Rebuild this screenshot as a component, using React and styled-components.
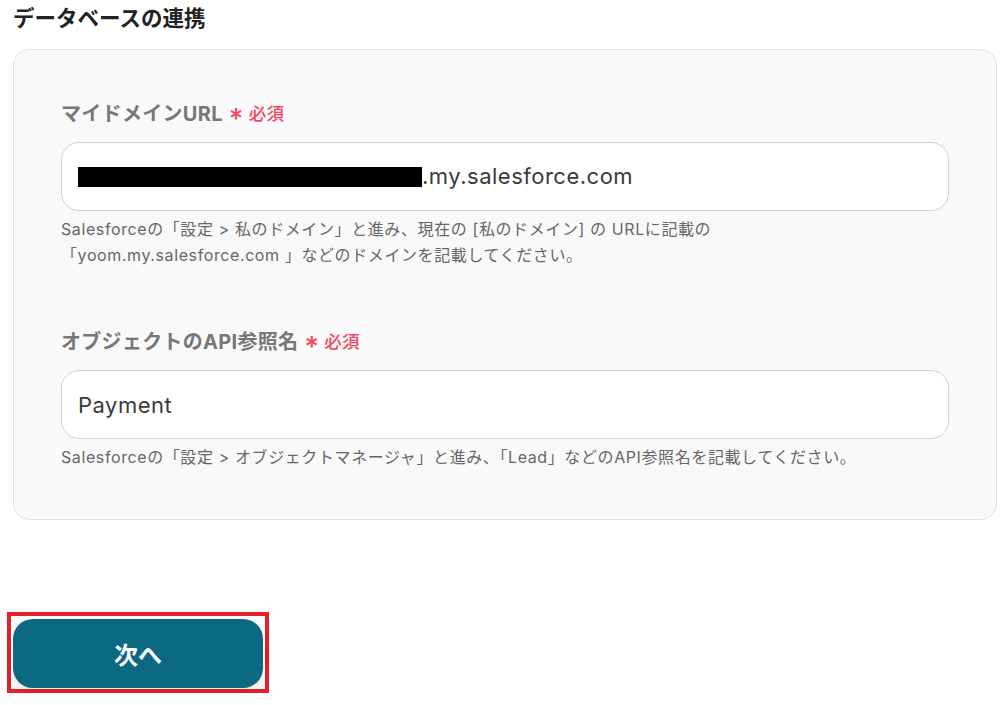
import React from 'react';
import styled, { createGlobalStyle } from 'styled-components';

const Global = createGlobalStyle`
  body {
    margin: 0;
    background: #fff;
    font-family: 'Inter', 'Noto Sans CJK JP', sans-serif;
  }
`;

const Page = styled.div`
  padding: 0 11px 0 13px;
`;

const Heading = styled.h2`
  margin: 0;
  padding-top: 3px;
  font-size: 21.5px;
  line-height: 30px;
  font-weight: 700;
  color: #222;
`;

const Card = styled.div`
  margin-top: 16px;
  background: #f9f9f9;
  border: 1px solid #e2e2e4;
  border-radius: 16px;
  padding: 50px 47px 49px;
`;

const Field = styled.div`
  & + & {
    margin-top: 60px;
  }
`;

const Label = styled.div`
  display: flex;
  align-items: center;
  gap: 6px;
  font-size: 20px;
  line-height: 28px;
  font-weight: 700;
  letter-spacing: 0.3px;
  color: #777;
`;

const Required = styled.span`
  display: inline-flex;
  align-items: center;
  gap: 5px;
  color: #f2475e;
  font-size: 17.5px;
  font-weight: 500;
  b {
    font-size: 28px;
    font-weight: 500;
    line-height: 1;
    position: relative;
    top: 5px;
  }
`;

const Input = styled.div`
  margin-top: 14px;
  height: 67px;
  background: #fff;
  border: 1px solid #cdd1d8;
  border-radius: 18px;
  display: flex;
  align-items: center;
  padding: 0 16px;
  font-size: 22px;
  line-height: 26px;
  color: #3a3a3a;
  letter-spacing: 0.5px;
  span {
    position: relative;
    top: -1px;
  }
`;

const Redacted = styled.i`
  display: block;
  width: 344px;
  height: 20px;
  background: #000;
`;

const Help = styled.p`
  margin: 5px 0 0;
  font-size: 16px;
  line-height: 26px;
  letter-spacing: 0.6px;
  color: #666;
`;

const Footer = styled.div`
  margin-top: 92px;
  margin-left: -6px;
  display: inline-block;
  border: 4px solid #e8202a;
  padding: 3px 2px 1px 2px;
`;

const NextButton = styled.button`
  width: 250px;
  height: 69px;
  border: none;
  border-radius: 20px;
  background: #0b6a82;
  color: #fff;
  font-family: inherit;
  font-size: 24px;
  font-weight: 700;
  box-shadow: 0 4px 14px rgba(0, 0, 0, 0.12);
  display: block;
`;

export default function App() {
  return (
    <Page>
      <Global />
      <Heading>データベースの連携</Heading>
      <Card>
        <Field>
          <Label>
            マイドメインURL
            <Required>
              <b>*</b>必須
            </Required>
          </Label>
          <Input>
            <Redacted />
            <span>.my.salesforce.com</span>
          </Input>
          <Help>
            Salesforceの「設定 &gt; 私のドメイン」と進み、現在の [私のドメイン] の URLに記載の
            <br />
            「yoom.my.salesforce.com 」などのドメインを記載してください。
          </Help>
        </Field>
        <Field>
          <Label>
            オブジェクトのAPI参照名
            <Required>
              <b>*</b>必須
            </Required>
          </Label>
          <Input>Payment</Input>
          <Help>Salesforceの「設定 &gt; オブジェクトマネージャ」と進み、「Lead」などのAPI参照名を記載してください。</Help>
        </Field>
      </Card>
      <Footer>
        <NextButton>次へ</NextButton>
      </Footer>
    </Page>
  );
}
